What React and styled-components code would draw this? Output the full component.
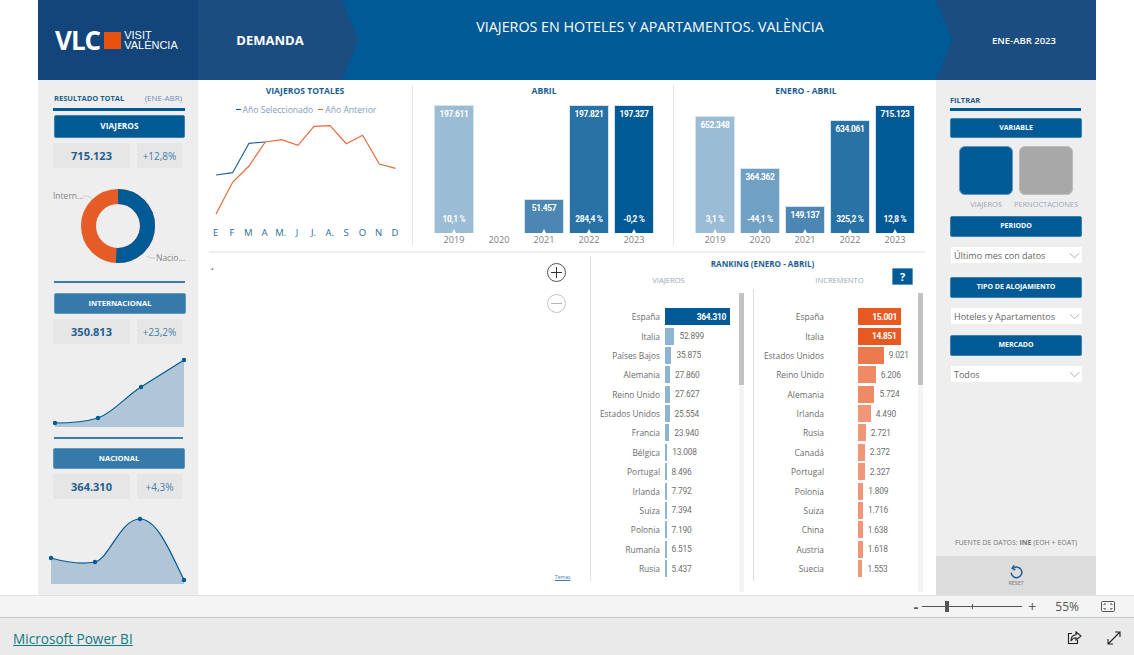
import React from 'react'
import styled, { createGlobalStyle } from 'styled-components'

const BLUE = '#005a96'
const SANS = '"Open Sans", "Noto Sans", sans-serif'
const NUM = 'Roboto, "Liberation Sans", sans-serif'

const Global = createGlobalStyle`
  html, body { margin: 0; padding: 0; background: #fff; overflow: hidden; }
  body { font-family: ${SANS}; }
`

const Page = styled.div`
  width: 1134px;
  height: 655px;
  display: flex;
  flex-direction: column;
`
const Report = styled.div`
  width: 1058px;
  height: 595px;
  margin: 0 38px;
  display: flex;
  flex-direction: column;
`
const Header = styled.header`
  height: 80px;
  display: grid;
  grid-template-columns: 160px 144px 610px 144px;
  background: #1c4d80;
  color: #fff;
`
const LogoCell = styled.div`
  background: #13457a;
  display: flex;
  align-items: center;
  padding: 0 0 0 17px;
`
const LogoVlc = styled.span`
  font: 700 26px/24px ${SANS};
  letter-spacing: -1px;
`
const LogoSquare = styled.span`
  width: 17px;
  height: 17px;
  margin: 0 3px 0 4px;
  background: #e9510e;
`
const LogoWords = styled.span`
  font: 400 11px/10px "Liberation Sans", sans-serif;
`
const DemandaCell = styled.div`
  display: flex;
  align-items: center;
  justify-content: center;
  font: 700 13px ${SANS};
`
const TitleCell = styled.div`
  background: ${BLUE};
  clip-path: polygon(0 0, calc(100% - 16px) 0, 100% 50%, calc(100% - 16px) 100%, 0 100%, 16px 50%);
  text-align: center;
  padding: 17px 0 0 6px;
  font: 400 14.3px/20px ${SANS};
`
const PeriodCell = styled.div`
  display: flex;
  align-items: center;
  justify-content: center;
  font: 600 9.5px ${SANS};
`
const Body = styled.div`
  flex: 1;
  display: flex;
  min-height: 0;
`
const Side = styled.aside`
  width: 160px;
  flex: none;
  box-sizing: border-box;
  background: #eeeeee;
  display: flex;
  flex-direction: column;
`
const LeftSide = styled(Side)`
  padding: 12px 13px 0 15px;
`
const RightSide = styled(Side)`
  padding: 15px 0 0;
`
const PanelHead = styled.div`
  display: flex;
  justify-content: space-between;
  align-items: baseline;
  padding: 0 3px 0 1px;
  font: 700 7.5px/11px ${SANS};
  color: #1f5f8f;
`
const HeadNote = styled.span`
  font: 400 8px/11px ${SANS};
  color: #6c93b3;
`
const Rule = styled.div`
  height: ${p => p.$h || 3}px;
  background: ${p => p.$c || BLUE};
  margin: ${p => p.$m || '4px 0 0'};
`
const SectionBtn = styled.div`
  height: ${p => p.$h || 21}px;
  margin: ${p => p.$m || '0'};
  padding-bottom: 2px;
  display: flex;
  align-items: center;
  justify-content: center;
  background: ${p => p.$c || BLUE};
  border: 1px solid ${p => (p.$c ? '#5f97bf' : '#3f7fab')};
  border-radius: 2px;
  box-sizing: border-box;
  color: #fff;
  font: 700 ${p => p.$fs || 7}px ${SANS};
`
const Stats = styled.div`
  display: grid;
  grid-template-columns: 77px 45px;
  column-gap: 7px;
  margin-top: 5px;
`
const StatValue = styled.div`
  height: 25px;
  background: #e6e6e6;
  display: flex;
  align-items: center;
  justify-content: center;
  color: #1f5f8f;
  font: 700 11px ${SANS};
`
const StatDelta = styled(StatValue)`
  font: 400 10px ${SANS};
  color: #3f7fab;
`
const SideChart = styled.svg`
  display: block;
  flex: none;
  margin: ${p => p.$m || '0'};
  overflow: visible;
`
const Center = styled.main`
  width: 738px;
  display: flex;
  flex-direction: column;
`
const TopRow = styled.div`
  height: 171px;
  display: flex;
  padding-top: 5px;
  box-sizing: border-box;
`
const ChartBlock = styled.section`
  width: ${p => p.$w}px;
  height: 160px;
  flex: none;
  box-sizing: border-box;
  border-right: ${p => (p.$line ? '1px solid #e6e6e6' : '0')};
  padding-left: ${p => p.$pad || 0}px;
`
const ChartTitle = styled.h3`
  margin: 0;
  height: 20px;
  text-align: center;
  padding-right: ${p => p.$pr || 0}px;
  font: 700 8.6px/12px ${SANS};
  color: #1f5f8f;
`
const Legend = styled.div`
  display: flex;
  justify-content: center;
  gap: 5px;
  margin: -2px 0 0 0;
  padding-left: 2px;
  height: 14px;
  font: 400 8.6px/14px ${SANS};
  color: #7f9cc2;
`
const LegendMark = styled.span`
  display: inline-block;
  width: 5px;
  height: 1.5px;
  margin-right: 2px;
  vertical-align: 3px;
  background: ${p => p.$c};
`
const LineSvg = styled.svg`
  display: block;
  margin: 8px 0 0 17.7px;
  overflow: visible;
`
const Months = styled.div`
  display: grid;
  grid-template-columns: repeat(12, 16.3px);
  padding-left: 9.5px;
  font: 400 9.5px/14px ${SANS};
  color: #2c6a9b;
  text-align: center;
`
const Bars = styled.div`
  height: 128px;
  display: flex;
  align-items: flex-end;
  gap: 5px;
`
const Bar = styled.div`
  width: 40px;
  height: ${p => p.$h}px;
  flex: none;
  position: relative;
  box-sizing: border-box;
  background: ${p => p.$c};
  border: 1px solid #d7e4ee;
  border-bottom-width: 0;
  display: flex;
  flex-direction: column;
  justify-content: space-between;
  align-items: center;
  padding: 3px 0 8px;
  color: #fff;
  font: 700 8.4px/11px ${NUM};
  letter-spacing: -0.3px;
  &::after {
    content: '';
    position: absolute;
    left: 50%;
    bottom: 0;
    margin-left: -2.5px;
    border: 2.5px solid transparent;
    border-top: 0;
    border-bottom: 4px solid #fff;
  }
`
const EmptyBar = styled.div`
  width: 40px;
  flex: none;
`
const Years = styled.div`
  display: flex;
  gap: 5px;
`
const Year = styled.span`
  width: 40px;
  text-align: center;
  font: 400 9.2px/14px ${SANS};
  color: #808080;
`
const Divider = styled.div`
  height: 2px;
  margin: 0 11px 0 11px;
  background: #efefef;
`
const LowerRow = styled.div`
  flex: 1;
  display: flex;
  align-items: flex-start;
  min-height: 0;
`
const MapArea = styled.section`
  width: 392px;
  flex: none;
  box-sizing: border-box;
  padding: 12px 22px 0 13px;
  position: relative;
  display: flex;
  flex-direction: column;
`
const MapDot = styled.span`
  font: 400 7px/10px ${SANS};
  color: #666;
`
const ZoomBtn = styled.div`
  position: absolute;
  left: 349px;
  top: ${p => p.$top}px;
  width: 17px;
  height: 17px;
  border-radius: 50%;
  border: 1px solid ${p => (p.$off ? '#c2c2c2' : '#555')};
  color: ${p => (p.$off ? '#b5b5b5' : '#333')};
  display: flex;
  align-items: center;
  justify-content: center;
`
const MapLink = styled.a`
  position: absolute;
  left: 357px;
  top: 321px;
  font: 400 5px/7px ${SANS};
  color: #3a7cab;
  text-decoration: underline;
`
const Ranking = styled.section`
  flex: 1;
  height: 325px;
  border-left: 1px solid #e3e3e3;
  margin: 3px 0 0;
  position: relative;
`
const RankTitle = styled.h3`
  margin: 0;
  text-align: center;
  padding: 2px 3px 0 0;
  height: 14px;
  font: 700 8.1px/12px ${SANS};
  color: #1f5f8f;
`
const RankHeads = styled.div`
  display: grid;
  grid-template-columns: 155px 187px;
  height: 16px;
  padding-top: 1px;
  text-align: center;
  font: 400 7.6px/14px ${SANS};
  color: #9aa6ba;
`
const HelpBtn = styled.div`
  position: absolute;
  left: 301px;
  top: 12px;
  width: 21px;
  height: 17px;
  border-radius: 1px;
  background: ${BLUE};
  border: 1px solid #5f97bf;
  box-sizing: border-box;
  display: flex;
  align-items: center;
  justify-content: center;
  color: #fff;
  font: 700 11px ${SANS};
`
const RankCols = styled.div`
  display: grid;
  grid-template-columns: 162px 184px;
`
const RankCol = styled.div`
  position: relative;
  padding-top: 18px;
  box-sizing: border-box;
  border-left: ${p => (p.$line ? '1px solid #dcdcdc' : '0')};
  height: 292px;
`
const RankRow = styled.div`
  height: 19.38px;
  display: flex;
  align-items: center;
`
const RankName = styled.span`
  width: ${p => p.$w}px;
  flex: none;
  margin-right: ${p => p.$gap}px;
  text-align: right;
  white-space: nowrap;
  font: 400 8.4px ${SANS};
  color: #6b6b6b;
`
const RankBar = styled.span`
  height: 17px;
  flex: none;
  background: ${p => p.$c};
  display: flex;
  align-items: center;
  justify-content: flex-end;
  padding-right: ${p => (p.$inside ? 4 : 0)}px;
  box-sizing: border-box;
  color: #fff;
  font: 700 8.4px ${NUM};
  letter-spacing: -0.3px;
`
const RankValue = styled.span`
  margin-left: 5px;
  font: 400 8.4px ${NUM};
  letter-spacing: -0.2px;
  color: #6f6f6f;
`
const ScrollTrack = styled.div`
  position: absolute;
  left: ${p => p.$left}px;
  top: 4px;
  width: 5px;
  height: 299px;
  background: #f4f4f4;
  &::before {
    content: '';
    display: block;
    height: 92px;
    background: #c2c2c2;
  }
`
const FilterHead = styled(PanelHead)`
  padding: 0 0 0 14px;
`
const FilterRule = styled(Rule)`
  margin: 2px 15px 0 14px;
`
const FilterStack = styled.div`
  padding: 7px 14px 0;
  display: flex;
  flex-direction: column;
`
const Toggles = styled.div`
  display: grid;
  grid-template-columns: 54px 54px;
  column-gap: 6px;
  padding: 8px 0 0 9px;
`
const ToggleTile = styled.div`
  height: 49px;
  border-radius: 6px;
  background: ${p => p.$c};
  border: 1px solid ${p => p.$b};
  box-sizing: border-box;
`
const ToggleLabel = styled.span`
  margin-top: 3px;
  height: 12px;
  text-align: center;
  white-space: nowrap;
  font: 400 7.4px/12px ${SANS};
  color: #9aa6ba;
  display: flex;
  justify-content: center;
`
const Dropdown = styled.div`
  height: 16px;
  margin: ${p => p.$m};
  background: #fff;
  display: flex;
  align-items: center;
  justify-content: space-between;
  padding: 0 2px 0 3px;
  margin-left: 1px;
  font: 400 9px ${SANS};
  color: #666;
`
const Source = styled.div`
  margin-top: auto;
  padding-bottom: 9px;
  text-align: center;
  font: 400 7px/9px ${SANS};
  color: #777;
`
const ResetBlock = styled.div`
  height: 39px;
  background: #dcdcdc;
  display: flex;
  flex-direction: column;
  align-items: center;
  padding-top: 9px;
  box-sizing: border-box;
  font: 400 5.4px/7px ${SANS};
  color: #777;
`
const ZoomBar = styled.div`
  height: 23px;
  box-sizing: border-box;
  background: #f4f4f4;
  border-top: 1px solid #e1e1e1;
  border-bottom: 1px solid #c8c8c8;
  display: flex;
  align-items: center;
  justify-content: flex-end;
  padding-right: 19px;
  color: #555;
`
const ZoomSign = styled.span`
  font: ${p => p.$w || 400} 14px/14px ${SANS};
  margin: ${p => p.$m};
`
const Slider = styled.div`
  width: 100px;
  height: 1px;
  background: #555;
  position: relative;
`
const SliderThumb = styled.span`
  position: absolute;
  left: 23px;
  top: -5px;
  width: 4px;
  height: 11px;
  background: #555;
`
const SliderTick = styled.span`
  position: absolute;
  left: 50px;
  top: -2px;
  width: 1px;
  height: 5px;
  background: #555;
`
const ZoomPct = styled.span`
  font: 400 12px/14px ${SANS};
  margin: 0 22px 0 19px;
`
const BiBar = styled.footer`
  flex: 1;
  background: #eaeaea;
  display: flex;
  align-items: center;
  justify-content: space-between;
  padding: 3px 13px 0 13px;
`
const BiLink = styled.a`
  font: 400 13.6px ${SANS};
  color: #117a7f;
  text-decoration: underline;
`
const BiIcons = styled.div`
  display: flex;
  align-items: center;
  gap: 25px;
`

const months = ['E', 'F', 'M', 'A', 'M.', 'J', 'J.', 'A.', 'S', 'O', 'N', 'D']
const selected = '0,50 16.6,47.7 33,18.3 49.3,17'
const previous = '0,89 16.6,57.3 33,41 49.3,17 65.6,14.7 82,20.3 98,1.3 114,0.7 130.3,18.7 146.6,10.3 163.3,39 179.6,43.3'

const barColors = ['#9bbcd5', '#70a0c3', '#4c87b3', '#2872a5', BLUE]
const abril = [
  { y: '2019', h: 128, v: '197.611', p: '10,1 %' },
  { y: '2020' },
  { y: '2021', h: 34, v: '51.457' },
  { y: '2022', h: 128, v: '197.821', p: '284,4 %' },
  { y: '2023', h: 128, v: '197.327', p: '-0,2 %' },
]
const eneroAbril = [
  { y: '2019', h: 117, v: '652.348', p: '3,1 %' },
  { y: '2020', h: 65, v: '364.362', p: '-44,1 %' },
  { y: '2021', h: 27, v: '149.137' },
  { y: '2022', h: 113, v: '634.061', p: '325,2 %' },
  { y: '2023', h: 128, v: '715.123', p: '12,8 %' },
]

const viajeros = [
  ['España', 364310, '364.310'], ['Italia', 52899, '52.899'], ['Países Bajos', 35875, '35.875'],
  ['Alemania', 27860, '27.860'], ['Reino Unido', 27627, '27.627'], ['Estados Unidos', 25554, '25.554'],
  ['Francia', 23940, '23.940'], ['Bélgica', 13008, '13.008'], ['Portugal', 8496, '8.496'],
  ['Irlanda', 7792, '7.792'], ['Suiza', 7394, '7.394'], ['Polonia', 7190, '7.190'],
  ['Rumanía', 6515, '6.515'], ['Rusia', 5437, '5.437'],
]
const incremento = [
  ['España', 15001, '15.001'], ['Italia', 14851, '14.851'], ['Estados Unidos', 9021, '9.021'],
  ['Reino Unido', 6206, '6.206'], ['Alemania', 5724, '5.724'], ['Irlanda', 4490, '4.490'],
  ['Rusia', 2721, '2.721'], ['Canadá', 2372, '2.372'], ['Portugal', 2327, '2.327'],
  ['Polonia', 1809, '1.809'], ['Suiza', 1716, '1.716'], ['China', 1638, '1.638'],
  ['Austria', 1618, '1.618'], ['Suecia', 1553, '1.553'],
]
const incColor = v => (v > 14000 ? '#e65a22' : v > 8000 ? '#ea7a4e' : v > 5000 ? '#ee8a64' : '#f0977a')

const Chevron = () => (
  <svg width="11" height="7" viewBox="0 0 14 8" fill="none" stroke="#a9a9a9" strokeWidth="1.2">
    <path d="M1 1l6 6 6-6" />
  </svg>
)

const BarGroup = ({ title, data, width, line }) => (
  <ChartBlock $w={width} $line={line} $pad={21}>
    <ChartTitle $pr={19}>{title}</ChartTitle>
    <Bars>
      {data.map((d, i) =>
        d.h ? (
          <Bar key={d.y} $h={d.h} $c={barColors[i]}>
            <span>{d.v}</span>
            {d.p && <span>{d.p}</span>}
          </Bar>
        ) : (
          <EmptyBar key={d.y} />
        )
      )}
    </Bars>
    <Years>
      {data.map(d => <Year key={d.y}>{d.y}</Year>)}
    </Years>
  </ChartBlock>
)

const Rank = ({ rows, nameW, gap, scale, color, inside, line, scrollLeft }) => (
  <RankCol $line={line}>
    {rows.map(([name, v, label]) => (
      <RankRow key={name}>
        <RankName $w={nameW} $gap={gap}>{name}</RankName>
        <RankBar
          $c={color(v)}
          $inside={v >= inside}
          style={{ width: Math.max(v * scale, 1.5) }}
        >
          {v >= inside && label}
        </RankBar>
        {v < inside && <RankValue>{label}</RankValue>}
      </RankRow>
    ))}
    <ScrollTrack $left={scrollLeft} />
  </RankCol>
)

export default function App() {
  return (
    <Page>
      <Global />
      <Report>
        <Header>
          <LogoCell>
            <LogoVlc>VLC</LogoVlc>
            <LogoSquare />
            <LogoWords>VISIT<br />VALÈNCIA</LogoWords>
          </LogoCell>
          <DemandaCell>DEMANDA</DemandaCell>
          <TitleCell>VIAJEROS EN HOTELES Y APARTAMENTOS. VALÈNCIA</TitleCell>
          <PeriodCell>ENE-ABR 2023</PeriodCell>
        </Header>
        <Body>
          <LeftSide>
            <PanelHead>
              <span>RESULTADO TOTAL</span>
              <HeadNote>(ENE-ABR)</HeadNote>
            </PanelHead>
            <Rule />
            <SectionBtn $h={23} $fs={8.4} $m="4px 0 0 1px">VIAJEROS</SectionBtn>
            <Stats>
              <StatValue>715.123</StatValue>
              <StatDelta>+12,8%</StatDelta>
            </Stats>
            <SideChart width="132" height="84" viewBox="53 188 132 84" $m="19px 0 0">
              <circle cx="118" cy="227" r="29.5" fill="none" stroke="#e65c26" strokeWidth="15" />
              <circle cx="118" cy="227" r="29.5" fill="none" stroke={BLUE} strokeWidth="15"
                strokeDasharray={`${2 * Math.PI * 29.5 * 0.509} 999`} transform="rotate(-90 118 227)" />
              <path d="M83 197h5l4 3M146 257l5 2h4" fill="none" stroke="#c4c4c4" strokeWidth="0.8" />
              <text x="53" y="200" fontSize="8.5" fill="#888" fontFamily="Open Sans">Intern...</text>
              <text x="156" y="262" fontSize="8.5" fill="#888" fontFamily="Open Sans">Nacio...</text>
            </SideChart>
            <Rule $h={2} $c="#3a7cab" $m="10px 0 0 1px" />
            <SectionBtn $c="#357aab" $fs={7.6} $m="10px -1px 0 1px">INTERNACIONAL</SectionBtn>
            <Stats>
              <StatValue>350.813</StatValue>
              <StatDelta>+23,2%</StatDelta>
            </Stats>
            <SideChart width="134" height="72" viewBox="53 357 134 72" $m="13px 0 0">
              <path d="M55 423C70 423 85 422 98 418C113 413 125 397 141 387C155 378 170 369 184 360L184 427L55 427Z" fill="#b0c6d7" />
              <path d="M55 423C70 423 85 422 98 418C113 413 125 397 141 387C155 378 170 369 184 360" fill="none" stroke={BLUE} strokeWidth="1.2" />
              {[[55, 423], [98, 418], [141, 387], [184, 360]].map(([x, y]) => <circle key={x} cx={x} cy={y} r="2.2" fill={BLUE} />)}
            </SideChart>
            <Rule $h={2} $c="#3a7cab" $m="8px 2px 0 1px" />
            <SectionBtn $c="#357aab" $fs={7.6} $m="9px 0 0">NACIONAL</SectionBtn>
            <Stats>
              <StatValue>364.310</StatValue>
              <StatDelta>+4,3%</StatDelta>
            </Stats>
            <SideChart width="136" height="72" viewBox="49 514 136 72" $m="16px 0 0 -4px">
              <path d="M51 557C65 561 80 564 95 561C110 557 120 518 140 518C158 518 172 555 184 579L184 583L51 583Z" fill="#b0c6d7" />
              <path d="M51 557C65 561 80 564 95 561C110 557 120 518 140 518C158 518 172 555 184 579" fill="none" stroke={BLUE} strokeWidth="1.2" />
              {[[51, 557], [95, 561], [140, 518], [184, 579]].map(([x, y]) => <circle key={x} cx={x} cy={y} r="2.2" fill={BLUE} />)}
            </SideChart>
          </LeftSide>

          <Center>
            <TopRow>
              <ChartBlock $w={215} $line>
                <ChartTitle>VIAJEROS TOTALES</ChartTitle>
                <Legend>
                  <span><LegendMark $c={BLUE} />Año Seleccionado</span>
                  <span><LegendMark $c="#e65c26" />Año Anterior</span>
                </Legend>
                <LineSvg width="180" height="101" viewBox="0 0 180 101">
                  <polyline points={selected} fill="none" stroke="#1f6296" strokeWidth="1.2" />
                  <polyline points={previous} fill="none" stroke="#e9693a" strokeWidth="1.2" />
                </LineSvg>
                <Months>
                  {months.map((m, i) => <span key={i}>{m}</span>)}
                </Months>
              </ChartBlock>
              <BarGroup title="ABRIL" data={abril} width={261} line />
              <BarGroup title="ENERO - ABRIL" data={eneroAbril} width={262} />
            </TopRow>
            <Divider />
            <LowerRow>
              <MapArea>
                <MapDot>•</MapDot>
                <ZoomBtn $top={10}>
                  <svg width="11" height="11" viewBox="0 0 11 11" stroke="currentColor" strokeWidth="1"><path d="M5.5 0v11M0 5.5h11" /></svg>
                </ZoomBtn>
                <ZoomBtn $top={41} $off>
                  <svg width="11" height="11" viewBox="0 0 11 11" stroke="currentColor" strokeWidth="1"><path d="M0 5.5h11" /></svg>
                </ZoomBtn>
                <MapLink>Temas</MapLink>
              </MapArea>
              <Ranking>
                <RankTitle>RANKING (ENERO - ABRIL)</RankTitle>
                <RankHeads>
                  <span>VIAJEROS</span>
                  <span>INCREMENTO</span>
                </RankHeads>
                <HelpBtn>?</HelpBtn>
                <RankCols>
                  <Rank rows={viajeros} nameW={69} gap={5} scale={65 / 364310} inside={100000}
                    color={v => (v > 100000 ? BLUE : '#8fb3d1')} scrollLeft={148} />
                  <Rank rows={incremento} nameW={70} gap={34} scale={43 / 15001} inside={10000}
                    color={incColor} line scrollLeft={164} />
                </RankCols>
              </Ranking>
            </LowerRow>
          </Center>

          <RightSide>
            <FilterHead><span>FILTRAR</span></FilterHead>
            <FilterRule />
            <FilterStack>
              <SectionBtn $h={20}>VARIABLE</SectionBtn>
              <Toggles>
                <ToggleTile $c={BLUE} $b="#5f97bf" />
                <ToggleTile $c="#a8a8a8" $b="#bdbdbd" />
                <ToggleLabel>VIAJEROS</ToggleLabel>
                <ToggleLabel>PERNOCTACIONES</ToggleLabel>
              </Toggles>
              <SectionBtn $m="6px 0 0">PERIODO</SectionBtn>
              <Dropdown $m="10px 0 0"><span>Último mes con datos</span><Chevron /></Dropdown>
              <SectionBtn $m="14px 0 0">TIPO DE ALOJAMIENTO</SectionBtn>
              <Dropdown $m="10px 0 0"><span>Hoteles y Apartamentos</span><Chevron /></Dropdown>
              <SectionBtn $m="11px 0 0">MERCADO</SectionBtn>
              <Dropdown $m="10px 0 0"><span>Todos</span><Chevron /></Dropdown>
            </FilterStack>
            <Source>FUENTE DE DATOS: <b>INE</b> (EOH + EOAT)</Source>
            <ResetBlock>
              <svg width="15" height="15" viewBox="0 0 15 15" fill="none" stroke="#1f5f8f" strokeWidth="1.5">
                <path d="M4.2 3.2A5.3 5.3 0 1 1 2.2 7.6" />
                <path d="M5.2 0.4L3.2 3.2L6.2 5" fill="none" />
              </svg>
              <span>RESET</span>
            </ResetBlock>
          </RightSide>
        </Body>
      </Report>
      <ZoomBar>
        <ZoomSign $w={700} $m="0 4px 0 0">-</ZoomSign>
        <Slider>
          <SliderThumb />
          <SliderTick />
        </Slider>
        <ZoomSign $m="0 0 0 6px">+</ZoomSign>
        <ZoomPct>55%</ZoomPct>
        <svg width="14" height="11" viewBox="0 0 14 11" fill="none" stroke="#555" strokeWidth="1">
          <rect x="0.5" y="0.5" width="13" height="10" rx="1" />
          <path d="M3 4V3h2M9 3h2v1M3 7v1h2M9 8h2V7" />
        </svg>
      </ZoomBar>
      <BiBar>
        <BiLink>Microsoft Power BI</BiLink>
        <BiIcons>
          <svg width="15" height="14" viewBox="0 0 15 14" fill="none" stroke="#222" strokeWidth="1.1">
            <path d="M5 2.5H1.5v10h9V9" />
            <path d="M9 1l5 4-5 4V6.8C6.5 6.8 5 8 4 10c0-3.5 2-6 5-6.2Z" />
          </svg>
          <svg width="14" height="14" viewBox="0 0 14 14" fill="none" stroke="#222" strokeWidth="1.1">
            <path d="M1 13L13 1M8 1h5v5M1 8v5h5" />
          </svg>
        </BiIcons>
      </BiBar>
    </Page>
  )
}
